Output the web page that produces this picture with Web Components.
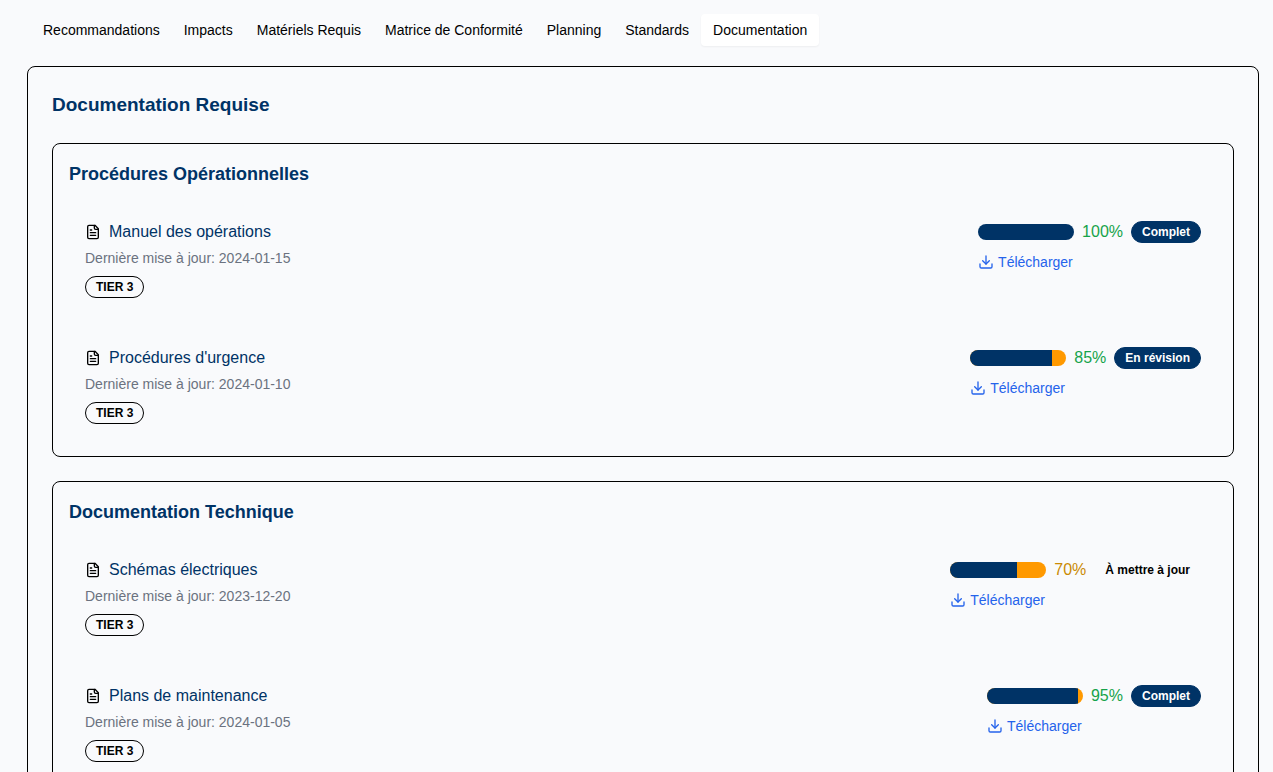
<!DOCTYPE html>
<html lang="fr">
<head>
<meta charset="utf-8">
<meta name="viewport" content="width=device-width, initial-scale=1">
<title>Documentation Requise</title>
<style>
  body {
    margin: 0;
    padding: 10px 14px 24px 27px;
    background: #f9fafc;
    color: #000;
    font: 16px/24px "Liberation Sans", Arial, sans-serif;
    --navy: #003366;
    --orange: #ff9900;
  }
</style>
</head>
<body>
<tab-bar>
  <tab-item>Recommandations</tab-item>
  <tab-item>Impacts</tab-item>
  <tab-item>Matériels Requis</tab-item>
  <tab-item>Matrice de Conformité</tab-item>
  <tab-item>Planning</tab-item>
  <tab-item>Standards</tab-item>
  <tab-item active>Documentation</tab-item>
</tab-bar>
<doc-panel>
  <span slot="title">Documentation Requise</span>
  <doc-section>
    <span slot="title">Procédures Opérationnelles</span>
    <doc-item name="Manuel des opérations" date="2024-01-15" tier="TIER 3" value="100" status="Complet"></doc-item>
    <doc-item name="Procédures d'urgence" date="2024-01-10" tier="TIER 3" value="85" status="En révision"></doc-item>
  </doc-section>
  <doc-section>
    <span slot="title">Documentation Technique</span>
    <doc-item name="Schémas électriques" date="2023-12-20" tier="TIER 3" value="70" status="À mettre à jour" variant="plain"></doc-item>
    <doc-item name="Plans de maintenance" date="2024-01-05" tier="TIER 3" value="95" status="Complet"></doc-item>
  </doc-section>
</doc-panel>

<script>
  class BaseElement extends HTMLElement {
    constructor() {
      super();
      this.attachShadow({ mode: "open" });
    }
    connectedCallback() {
      this.shadowRoot.innerHTML = this.render();
    }
  }

  customElements.define("tab-bar", class extends BaseElement {
    render() {
      return `<style>
        :host { display: block; margin-bottom: 16px; }
        nav { display: flex; padding: 4px; }
      </style><nav aria-label="Sections"><slot></slot></nav>`;
    }
  });

  customElements.define("tab-item", class extends BaseElement {
    render() {
      const active = this.hasAttribute("active");
      return `<style>
        :host { display: block; }
        button {
          display: block; margin: 0; padding: 6px 12px; border: 0; border-radius: 4px;
          background: transparent; color: inherit; font: inherit;
          font-size: 14px; line-height: 20px; white-space: nowrap; cursor: pointer;
        }
        :host([active]) button { background: #fff; box-shadow: 0 1px 2px rgba(0, 0, 0, .05); }
      </style><button type="button" ${active ? 'aria-current="page"' : ""}><slot></slot></button>`;
    }
  });

  customElements.define("doc-panel", class extends BaseElement {
    render() {
      return `<style>
        :host { display: block; padding: 24px; border: 1px solid #000; border-radius: 8px; }
        h2 { margin: 0 0 24px; color: var(--navy); font-size: 19px; line-height: 28px; }
        div { display: grid; gap: 24px; }
      </style><h2><slot name="title"></slot></h2><div><slot></slot></div>`;
    }
  });

  customElements.define("doc-section", class extends BaseElement {
    render() {
      return `<style>
        :host { display: block; padding: 16px; border: 1px solid #000; border-radius: 8px; }
        h3 { margin: 0 0 16px; color: var(--navy); font-size: 18px; line-height: 28px; }
        div { display: grid; gap: 16px; }
      </style><h3><slot name="title"></slot></h3><div><slot></slot></div>`;
    }
  });

  customElements.define("status-badge", class extends BaseElement {
    render() {
      return `<style>
        :host {
          display: inline-block; padding: 2px 10px; border: 1px solid #000; border-radius: 999px;
          font-size: 12px; line-height: 16px; font-weight: 700; white-space: nowrap;
        }
        :host([variant="solid"]) { background: var(--navy); border-color: var(--navy); color: #fff; }
        :host([variant="plain"]) { border-color: transparent; }
      </style><slot></slot>`;
    }
  });

  customElements.define("doc-item", class extends BaseElement {
    render() {
      const get = (name) => this.getAttribute(name);
      const value = Number(get("value"));
      return `<style>
        :host { display: flex; justify-content: space-between; align-items: flex-start; padding: 16px; }
        .row { display: flex; align-items: center; gap: 8px; height: 24px; }
        h4 { margin: 0; color: var(--navy); font-size: 16px; line-height: 24px; font-weight: 400; }
        p { margin: 4px 0 8px; color: #6b7280; font-size: 14px; line-height: 20px; }
        .tier { display: flex; }
        svg { display: block; width: 16px; height: 16px; fill: none; stroke: currentColor;
          stroke-width: 2; stroke-linecap: round; stroke-linejoin: round; }
        progress {
          appearance: none; -webkit-appearance: none; display: block; width: 96px; height: 16px;
          border: 0; border-radius: 8px; overflow: hidden; background: var(--orange);
        }
        progress::-webkit-progress-bar { background: var(--orange); }
        progress::-webkit-progress-value { background: var(--navy); }
        progress::-moz-progress-bar { background: var(--navy); }
        .high { color: #16a34a; }
        .medium { color: #ca8a04; }
        button {
          display: flex; align-items: center; gap: 4px; margin: 8px 0 0; padding: 0; border: 0;
          background: none; color: #2563eb; font: inherit; font-size: 14px; line-height: 20px; cursor: pointer;
        }
      </style>
      <div>
        <div class="row">
          <svg viewBox="0 0 24 24" aria-hidden="true"><path d="M15 2H6a2 2 0 0 0-2 2v16a2 2 0 0 0 2 2h12a2 2 0 0 0 2-2V7Z"/><path d="M14 2v4a2 2 0 0 0 2 2h4"/><path d="M10 9H8"/><path d="M16 13H8"/><path d="M16 17H8"/></svg>
          <h4>${get("name")}</h4>
        </div>
        <p>Dernière mise à jour: ${get("date")}</p>
        <div class="tier"><status-badge>${get("tier")}</status-badge></div>
      </div>
      <div>
        <div class="row">
          <progress max="100" value="${value}" aria-label="Avancement : ${get("name")}"></progress>
          <span class="${value >= 80 ? "high" : "medium"}">${value}%</span>
          <status-badge variant="${get("variant") || "solid"}">${get("status")}</status-badge>
        </div>
        <button type="button">
          <svg viewBox="0 0 24 24" aria-hidden="true"><path d="M21 15v4a2 2 0 0 1-2 2H5a2 2 0 0 1-2-2v-4"/><path d="m7 10 5 5 5-5"/><path d="M12 15V3"/></svg>
          Télécharger
        </button>
      </div>`;
    }
  });
</script>
</body>
</html>
